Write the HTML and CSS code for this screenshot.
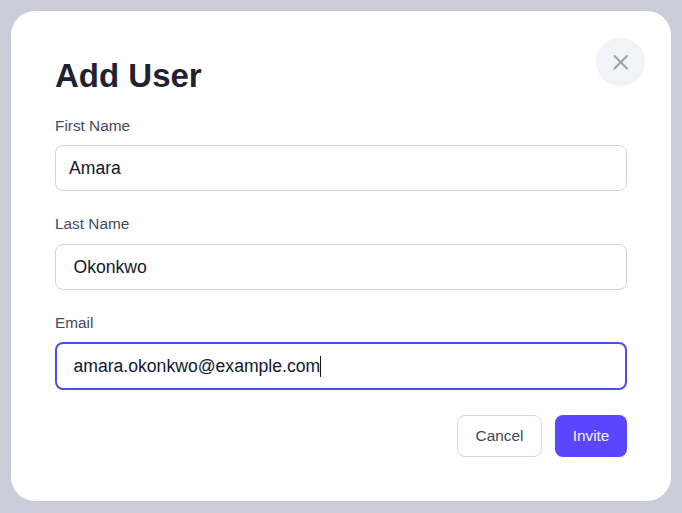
FILE: index.html
```html
<!DOCTYPE html>
<html lang="en">
<head>
    <meta charset="UTF-8">
    <meta name="viewport" content="width=device-width, initial-scale=1.0">
    <title>Add User</title>
    <link rel="stylesheet" href="styles.css">
</head>
<body>
    <div class="modal">
        <button class="close-button" aria-label="Close">
            <svg width="16" height="16" viewBox="0 0 16 16" fill="none" stroke="#9a9fb0" stroke-width="2" stroke-linecap="round">
                <path d="M1.5 2L14 14.5M14 2L1.5 14.5"/>
            </svg>
        </button>
        <h1 class="title">Add User</h1>
        <div class="field field-first">
            <div class="label">First Name</div>
            <div class="input input-first">Amara</div>
        </div>
        <div class="field field-last">
            <div class="label">Last Name</div>
            <div class="input">Okonkwo</div>
        </div>
        <div class="field field-email">
            <div class="label">Email</div>
            <div class="input input-focus">amara.okonkwo@example.com<span class="caret"></span></div>
        </div>
        <div class="button-container">
            <button class="btn btn-cancel">Cancel</button>
            <button class="btn btn-invite">Invite</button>
        </div>
    </div>
</body>
</html>
```

FILE: styles.css
```css
body {
    background-color: #cbcdd9;
    margin: 0;
    height: 513px;
    overflow: hidden;
    padding: 11px;
    box-sizing: border-box;
    font-family: "Liberation Sans", Arial, sans-serif;
}

.modal {
    position: relative;
    width: 660px;
    height: 490px;
    box-sizing: border-box;
    padding: 44px 44px 0;
    background-color: white;
    border-radius: 24px;
}

.close-button {
    position: absolute;
    top: 27px;
    right: 26px;
    width: 49px;
    height: 48px;
    padding: 0;
    border: none;
    border-radius: 50%;
    background-color: #f2f3f7;
    display: flex;
    justify-content: center;
    align-items: center;
}

.title {
    margin: 0;
    font-size: 33px;
    line-height: 41px;
    font-weight: bold;
    color: #1f2233;
}

.field-first {
    margin-top: 21px;
}

.field-first .label,
.field-email .label {
    margin-bottom: 10px;
}

.field-last,
.field-email {
    margin-top: 24px;
}

.label {
    font-size: 15.36px;
    line-height: 18px;
    color: #444a5e;
    margin-bottom: 11px;
}

.input {
    width: 572px;
    height: 46px;
    box-sizing: border-box;
    padding-left: 17.5px;
    border: 1px solid #d0d1e0;
    border-radius: 8px;
    font-size: 17.6px;
    line-height: 44px;
    color: #14182b;
    white-space: nowrap;
}

.input-first {
    padding-left: 13px;
}

.input-focus {
    height: 48px;
    padding-left: 16.5px;
    border: 2px solid #4a4fe8;
}

.caret {
    display: inline-block;
    width: 1px;
    height: 21px;
    background-color: #14182b;
    vertical-align: -5px;
}

.button-container {
    display: flex;
    justify-content: flex-end;
    gap: 13px;
    margin-top: 25px;
}

.btn {
    height: 42px;
    box-sizing: border-box;
    border-radius: 8px;
    font-family: "Liberation Sans", Arial, sans-serif;
    font-size: 15.36px;
    padding: 0;
}

.btn-cancel {
    width: 85px;
    background-color: white;
    border: 1px solid #d6d7e0;
    color: #434759;
}

.btn-invite {
    width: 72px;
    background-color: #5a46ff;
    border: none;
    color: #f4f3ff;
}
```
